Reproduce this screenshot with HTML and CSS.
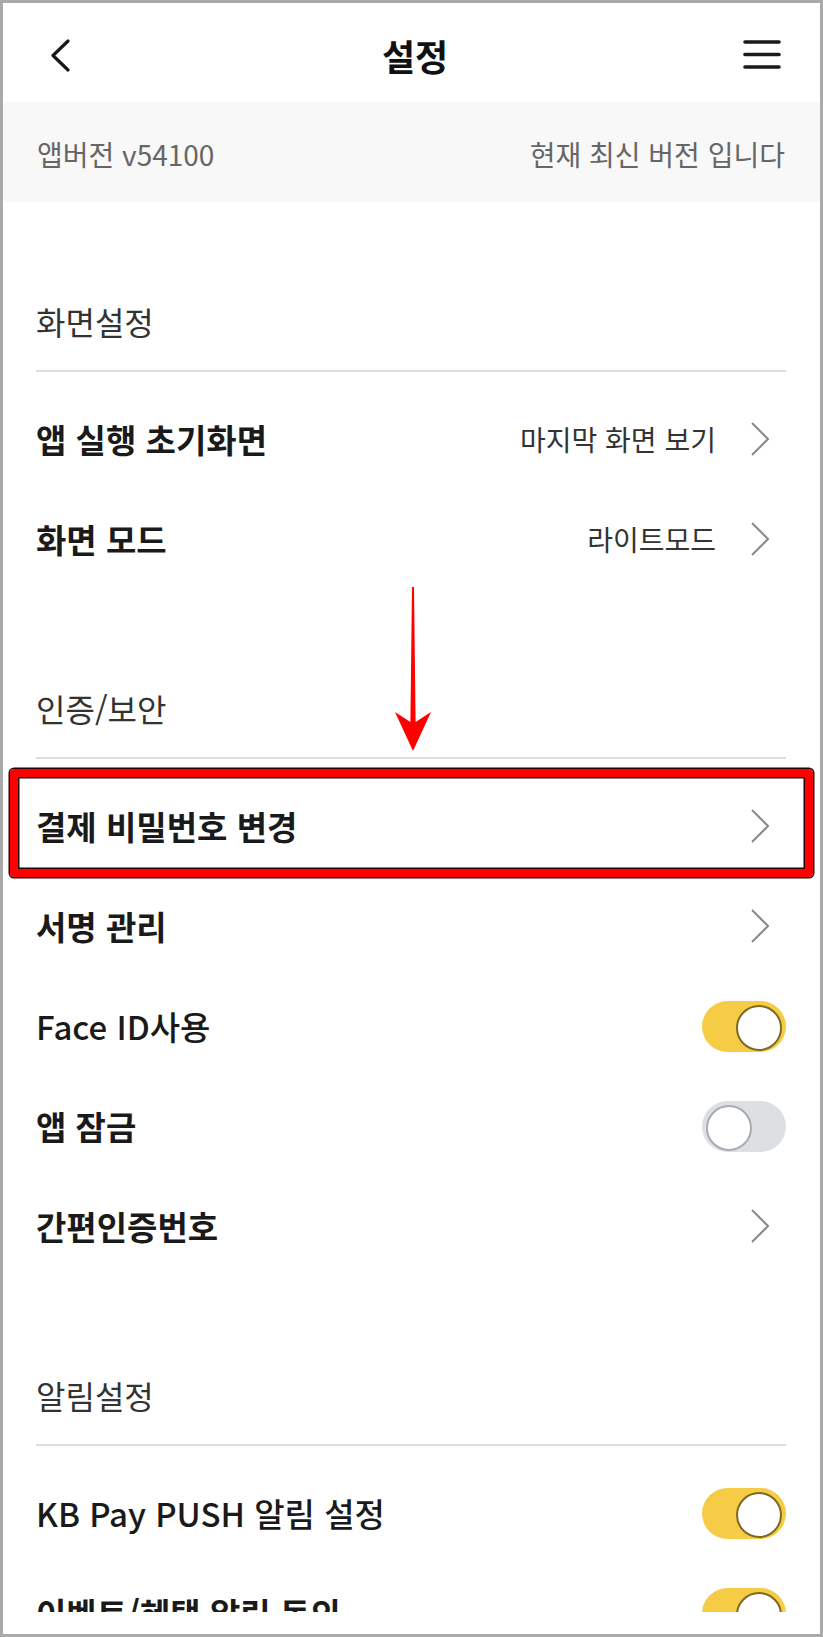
FILE: index.html
```html
<!DOCTYPE html>
<html lang="ko">
<head>
    <meta charset="UTF-8">
    <meta name="viewport" content="width=device-width, initial-scale=1.0">
    <title>설정</title>
    <link rel="stylesheet" href="styles.css">
</head>
<body>
    <div class="frame">
        <div class="screen">
            <div class="topbar">
                <svg class="back" viewBox="0 0 22 33" width="22" height="33">
                    <polyline points="19,2 4,16.5 19,31" fill="none" stroke="#1a1a1a" stroke-width="3.2" stroke-linecap="round" stroke-linejoin="round"/>
                </svg>
                <h1>설정</h1>
                <svg class="menu" viewBox="0 0 38 30" width="38" height="30">
                    <g stroke="#1a1a1a" stroke-width="3.6" stroke-linecap="round">
                        <line x1="2" y1="2" x2="36" y2="2"/>
                        <line x1="2" y1="14.5" x2="36" y2="14.5"/>
                        <line x1="2" y1="27" x2="36" y2="27"/>
                    </g>
                </svg>
            </div>

            <div class="version">
                <span>앱버전 v54100</span>
                <span>현재 최신 버전 입니다</span>
            </div>

            <!-- 화면설정 -->
            <div class="section">
                <div class="section-title">화면설정</div>
                <div class="rows">
                    <div class="row">
                        <span class="label">앱 실행 초기화면</span>
                        <span class="value">마지막 화면 보기
                            <svg class="chevron" viewBox="0 0 18 34" width="18" height="34"><polyline points="1,1 17,17 1,33" fill="none" stroke="#8a8a8a" stroke-width="2"/></svg>
                        </span>
                    </div>
                    <div class="row">
                        <span class="label">화면 모드</span>
                        <span class="value">라이트모드
                            <svg class="chevron" viewBox="0 0 18 34" width="18" height="34"><polyline points="1,1 17,17 1,33" fill="none" stroke="#8a8a8a" stroke-width="2"/></svg>
                        </span>
                    </div>
                </div>
            </div>

            <!-- 인증/보안 -->
            <div class="section">
                <div class="section-title">인증/보안</div>
                <div class="rows">
                    <div class="row">
                        <span class="label">결제 비밀번호 변경</span>
                        <span class="value">
                            <svg class="chevron" viewBox="0 0 18 34" width="18" height="34"><polyline points="1,1 17,17 1,33" fill="none" stroke="#8a8a8a" stroke-width="2"/></svg>
                        </span>
                        <span class="mark"></span>
                    </div>
                    <div class="row">
                        <span class="label">서명 관리</span>
                        <span class="value">
                            <svg class="chevron" viewBox="0 0 18 34" width="18" height="34"><polyline points="1,1 17,17 1,33" fill="none" stroke="#8a8a8a" stroke-width="2"/></svg>
                        </span>
                    </div>
                    <div class="row">
                        <span class="label medium">Face ID사용</span>
                        <span class="toggle on"></span>
                    </div>
                    <div class="row">
                        <span class="label">앱 잠금</span>
                        <span class="toggle"></span>
                    </div>
                    <div class="row">
                        <span class="label">간편인증번호</span>
                        <span class="value">
                            <svg class="chevron" viewBox="0 0 18 34" width="18" height="34"><polyline points="1,1 17,17 1,33" fill="none" stroke="#8a8a8a" stroke-width="2"/></svg>
                        </span>
                    </div>
                </div>
            </div>

            <!-- 알림설정 -->
            <div class="section">
                <div class="section-title">알림설정</div>
                <div class="rows">
                    <div class="row">
                        <span class="label medium">KB Pay PUSH 알림 설정</span>
                        <span class="toggle on"></span>
                    </div>
                    <div class="row">
                        <span class="label">이벤트/혜택 알림 동의</span>
                        <span class="toggle on"></span>
                    </div>
                </div>
            </div>
        </div>

        <!-- annotation arrow -->
        <svg class="arrow" viewBox="0 0 38 168" width="38" height="168">
            <path d="M18 2 L20 2 L21.6 137 L37 127 L19 166 L1 127 L16.4 137 Z" fill="#ff0000"/>
        </svg>
    </div>
</body>
</html>
```

FILE: styles.css
```css
* {
    margin: 0;
    padding: 0;
    box-sizing: border-box;
}

body {
    font-family: "Noto Sans CJK KR", "Noto Sans", sans-serif;
    background: #fff;
}

.frame {
    position: relative;
    width: 823px;
    height: 1637px;
    border: 3px solid #aaa;
    background: #fff;
    overflow: hidden;
}

.screen {
    height: 1609px;
    overflow: hidden;
}

/* Top bar */
.topbar {
    height: 99px;
    display: grid;
    grid-template-columns: 1fr auto 1fr;
    align-items: center;
    padding: 5px 39px 0 46px;
}

.topbar h1 {
    font-size: 36px;
    font-weight: 700;
    color: #111;
    line-height: 1;
}

.back {
    display: block;
}

.menu {
    display: block;
    justify-self: end;
}

/* Version band */
.version {
    height: 100px;
    display: flex;
    justify-content: space-between;
    align-items: center;
    padding: 3px 35px 0 34px;
    background: #f8f8f8;
    font-size: 28px;
    color: #666;
}

/* Sections */
.section {
    padding: 99px 34px 0 33px;
}

.section-title {
    font-size: 32px;
    line-height: 40px;
    color: #333;
    padding-bottom: 29px;
    border-bottom: 2px solid #ddd;
}

.rows {
    padding-top: 17px;
}

.row {
    position: relative;
    height: 100px;
    display: flex;
    justify-content: space-between;
    align-items: center;
}

.label {
    font-size: 33px;
    font-weight: 700;
    color: #1a1a1a;
}

.label.medium {
    font-weight: 500;
}

.value {
    display: flex;
    align-items: center;
    gap: 35px;
    font-size: 28px;
    color: #333;
}

.chevron {
    display: block;
    margin-right: 17px;
}

/* Toggle switches */
.toggle {
    position: relative;
    width: 84px;
    height: 51px;
    border-radius: 26px;
    background: #dde0e3;
}

.toggle::after {
    content: "";
    position: absolute;
    top: 4.5px;
    left: 4px;
    width: 42px;
    height: 42px;
    border-radius: 50%;
    background: #fff;
    border: 2px solid #a8acb2;
}

.toggle.on {
    background: #f6cc46;
}

.toggle.on::after {
    left: auto;
    right: 4px;
    border-color: #7d6a22;
}

/* Annotations */
.mark {
    position: absolute;
    left: -26px;
    right: -27px;
    top: -7px;
    bottom: -1px;
    border: 8px solid #ff0000;
    border-radius: 4px;
    box-shadow: 0 0 0 1.5px #2a0000, inset 0 0 0 1.5px #2a0000;
}

.arrow {
    position: absolute;
    left: 391px;
    top: 582px;
}
```
